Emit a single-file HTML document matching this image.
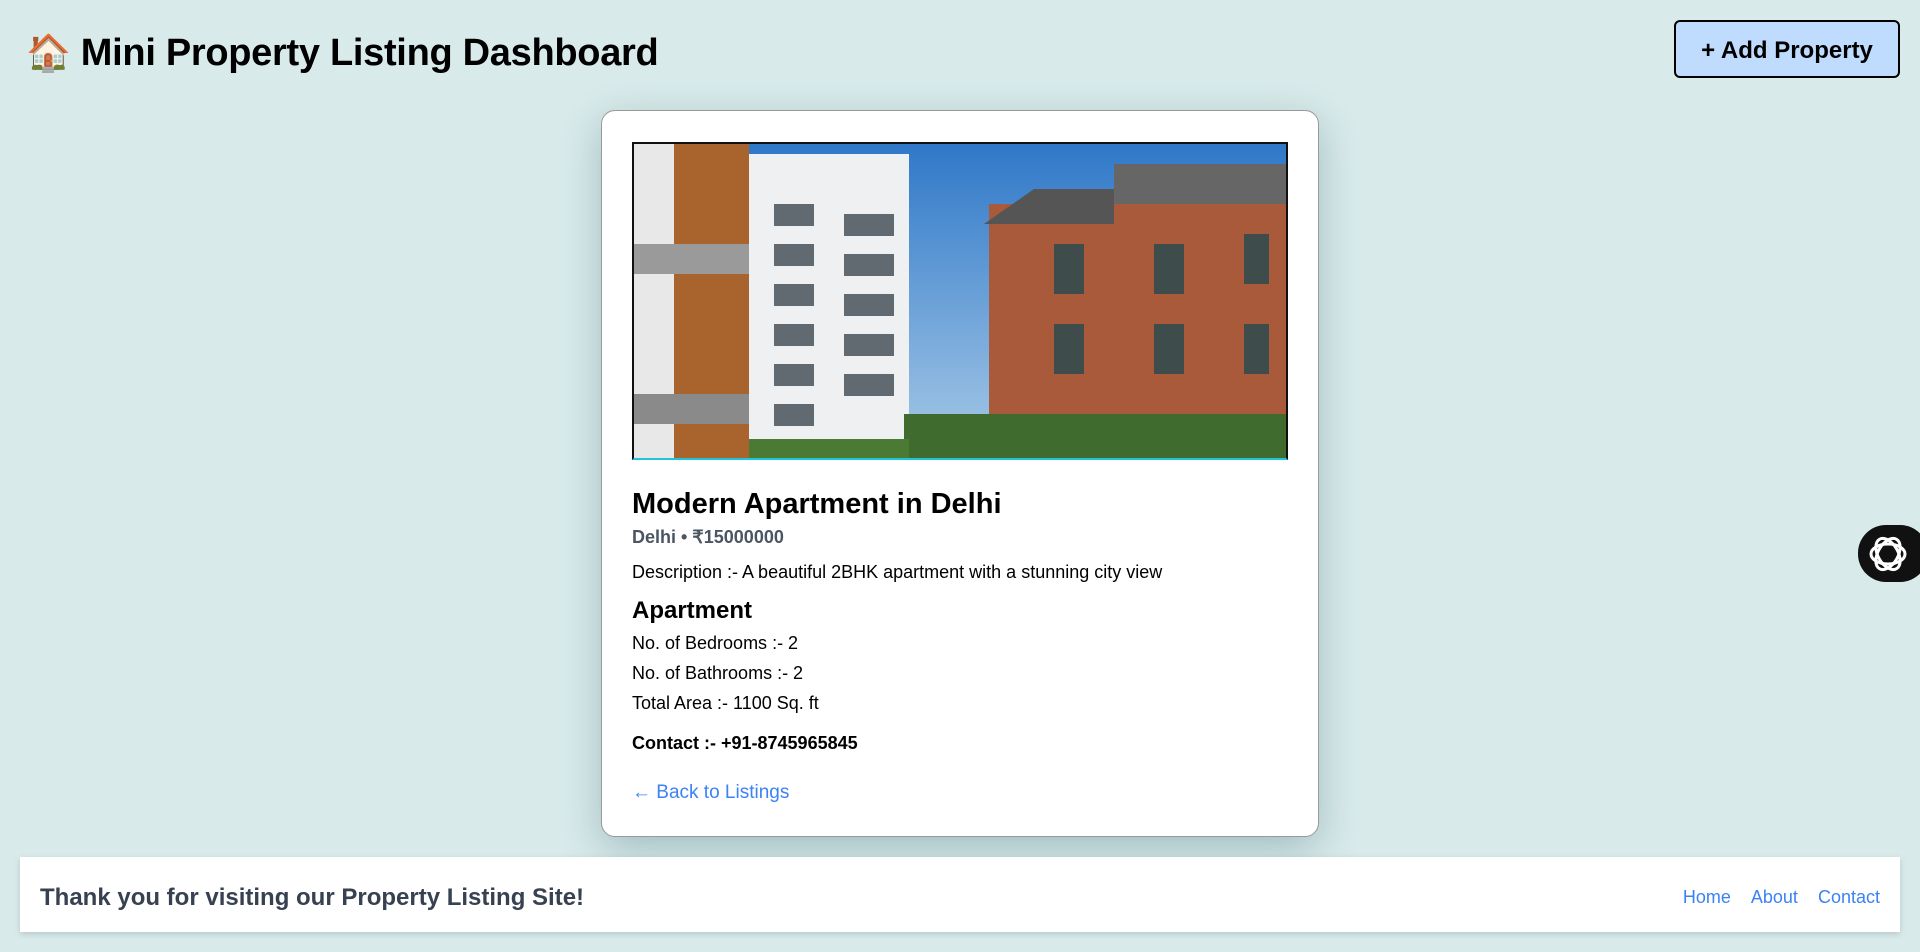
<!DOCTYPE html>
<html><head><meta charset="utf-8"><style>
*{margin:0;padding:0;box-sizing:border-box}
body{width:1920px;height:952px;background:#d8eaea;font-family:"Liberation Sans",sans-serif;position:relative;overflow:hidden;color:#000}
.abs{position:absolute}
h1{position:absolute;left:26px;top:31px;font-size:38px;font-weight:bold;line-height:44px;white-space:nowrap;letter-spacing:-0.3px}
.btn{left:1674px;top:20px;width:226px;height:58px;background:#bfdbfe;border:2px solid #000;border-radius:6px;font-weight:bold;font-size:24px;display:flex;align-items:center;justify-content:center;padding-top:3px}
.card{left:601px;top:110px;width:718px;height:727px;background:#fff;border:1.5px solid #999;border-radius:14px;box-shadow:0 12px 40px rgba(0,60,70,.25)}
.img{left:632px;top:142px;width:656px;height:318px;border:2px solid #111;border-bottom-color:#22c5d5;overflow:hidden}
.t{left:632px;white-space:nowrap}
.foot{left:20px;top:857px;width:1880px;height:75px;background:#fff;box-shadow:0 2px 6px rgba(0,0,0,.15)}
a{color:#3b82f6;text-decoration:none}
</style></head><body>
<h1><span style="font-size:36px">🏠</span> Mini Property Listing Dashboard</h1>
<div class="abs btn">+ Add Property</div>
<div class="abs card"></div>
<div class="abs img">
<svg width="656" height="318" viewBox="0 0 656 318">
<defs><linearGradient id="sky" x1="0" y1="0" x2="0" y2="1"><stop offset="0" stop-color="#2f78c8"/><stop offset="1" stop-color="#a9cbe8"/></linearGradient></defs>
<rect width="656" height="318" fill="url(#sky)"/>
<rect x="0" y="0" width="60" height="318" fill="#e8e8e8"/>
<rect x="40" y="0" width="75" height="318" fill="#a9642e"/>
<rect x="0" y="100" width="115" height="30" fill="#9a9a9a"/>
<rect x="0" y="250" width="115" height="30" fill="#8a8a8a"/>
<rect x="115" y="10" width="160" height="308" fill="#eef0f2"/>
<g fill="#606a70"><rect x="140" y="60" width="40" height="22"/><rect x="140" y="100" width="40" height="22"/><rect x="140" y="140" width="40" height="22"/><rect x="140" y="180" width="40" height="22"/><rect x="140" y="220" width="40" height="22"/><rect x="140" y="260" width="40" height="22"/><rect x="210" y="70" width="50" height="22"/><rect x="210" y="110" width="50" height="22"/><rect x="210" y="150" width="50" height="22"/><rect x="210" y="190" width="50" height="22"/><rect x="210" y="230" width="50" height="22"/></g>
<rect x="355" y="60" width="301" height="258" fill="#a85a3a"/>
<polygon points="350,80 400,45 480,45 480,80" fill="#555"/>
<rect x="480" y="20" width="176" height="40" fill="#666"/>
<g fill="#3e4c4c"><rect x="420" y="100" width="30" height="50"/><rect x="420" y="180" width="30" height="50"/><rect x="520" y="100" width="30" height="50"/><rect x="520" y="180" width="30" height="50"/><rect x="610" y="90" width="25" height="50"/><rect x="610" y="180" width="25" height="50"/></g>
<rect x="270" y="270" width="386" height="48" fill="#3f6b2e"/>
<rect x="115" y="295" width="160" height="23" fill="#4b7a35"/>
</svg></div>
<div class="abs t" style="top:486px;font-size:29px;font-weight:bold;line-height:36px">Modern Apartment in Delhi</div>
<div class="abs t" style="top:527px;font-size:18px;font-weight:bold;color:#4b5563">Delhi • ₹15000000</div>
<div class="abs t" style="top:562px;font-size:18px">Description :- A beautiful 2BHK apartment with a stunning city view</div>
<div class="abs t" style="top:597px;font-size:24px;font-weight:bold">Apartment</div>
<div class="abs t" style="top:633px;font-size:18px">No. of Bedrooms :- 2</div>
<div class="abs t" style="top:663px;font-size:18px">No. of Bathrooms :- 2</div>
<div class="abs t" style="top:693px;font-size:18px">Total Area :- 1100 Sq. ft</div>
<div class="abs t" style="top:733px;font-size:18px;font-weight:bold">Contact :- +91-8745965845</div>
<div class="abs t" style="top:782px;font-size:19px"><a>← Back to Listings</a></div>
<div class="abs foot">
<div class="abs" style="left:20px;top:27px;font-size:24px;font-weight:bold;color:#374151;white-space:nowrap">Thank you for visiting our Property Listing Site!</div>
<div class="abs" style="right:20px;top:30px;font-size:18px;white-space:nowrap"><a>Home</a>&nbsp;&nbsp;&nbsp;&nbsp;<a>About</a>&nbsp;&nbsp;&nbsp;&nbsp;<a>Contact</a></div>
</div>
<div class="abs" style="left:1858px;top:525px;width:70px;height:57px;background:#111;border-radius:28px;display:flex;align-items:center;padding-left:10px">
<svg width="40" height="40" viewBox="0 0 40 40" fill="none" stroke="#fff" stroke-width="3"><ellipse cx="20" cy="20" rx="17" ry="10"/><ellipse cx="20" cy="20" rx="17" ry="10" transform="rotate(60 20 20)"/><ellipse cx="20" cy="20" rx="17" ry="10" transform="rotate(120 20 20)"/></svg>
</div>
</body></html>
